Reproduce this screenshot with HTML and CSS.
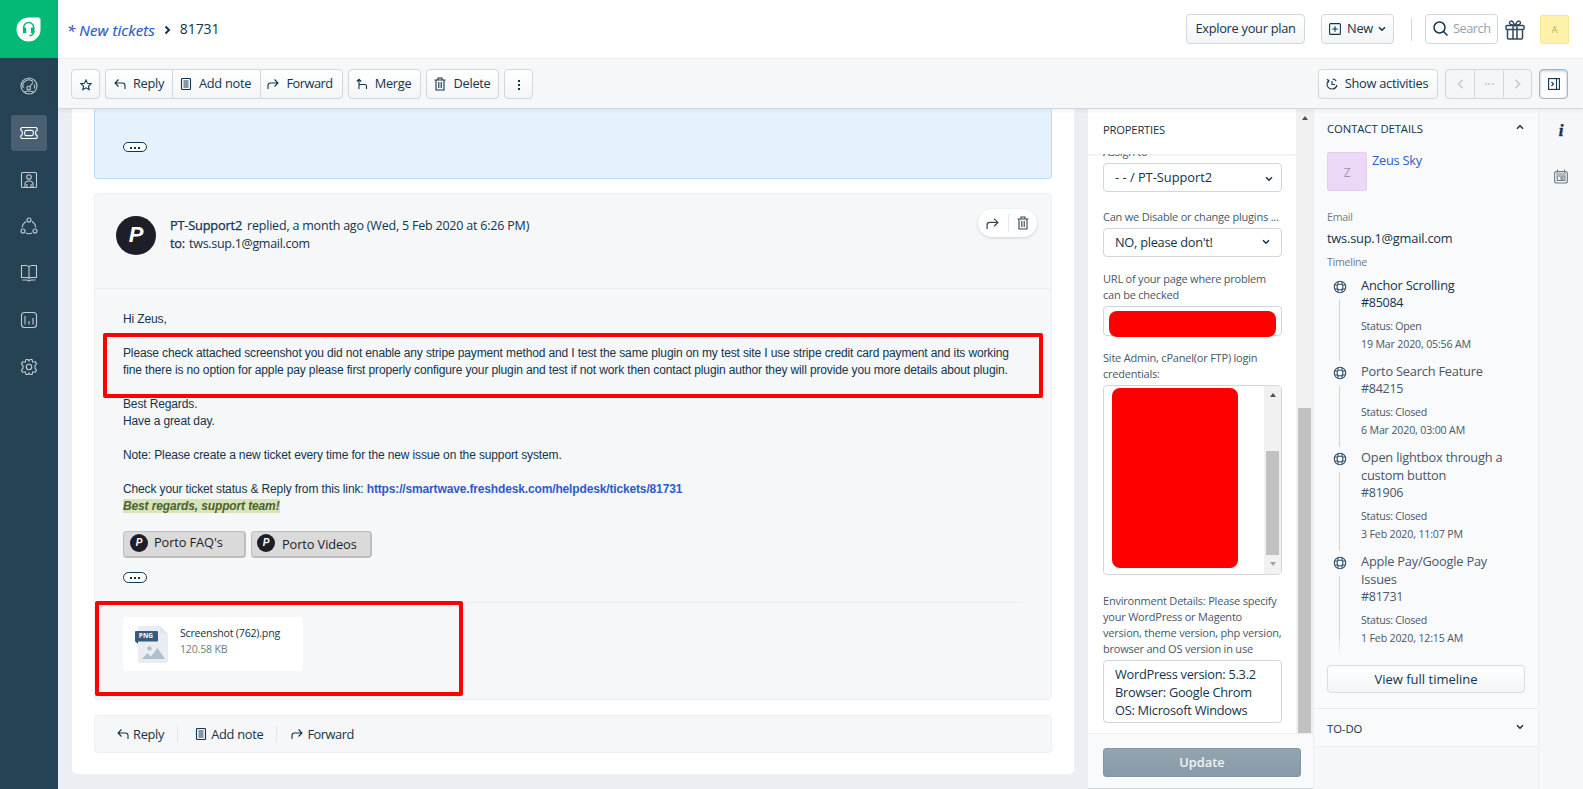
FILE: index.html
```
<!DOCTYPE html>
<html lang="en">
<head>
  <meta charset="UTF-8" />
  <meta name="viewport" content="width=device-width, initial-scale=1.0" />
  <title>81731 | New tickets</title>
  <link rel="stylesheet" href="styles.css">
</head>
<body>
  <svg class="defs" width="0" height="0">
    <symbol id="i-reply" viewBox="0 0 12 12"><path d="M4.500 1.500L1 5l3.500 3.500M1 5h7.500q2.500 0 2.500 2.500V11" /></symbol>
    <symbol id="i-forward" viewBox="0 0 12 12"><path d="M7.500 1.500L11 5 7.500 8.500M11 5H3.500Q1 5 1 7.500V11" /></symbol>
    <symbol id="i-note" viewBox="0 0 12 12"><rect x="1.500" y=".5" width="9" height="11" rx="1" /><path d="M3.500 3h5M3.500 5h5M3.500 7h5M3.500 9h5" /></symbol>
    <symbol id="i-trash" viewBox="0 0 12 14"><path d="M.5 3h11M4 3V1h4v2M2 3v10h8V3M4.800 5v6M7.200 5v6" /></symbol>
    <symbol id="i-down" viewBox="0 0 8 6"><path d="M1 1.200l3 3 3-3" /></symbol>
    <symbol id="i-ring" viewBox="0 0 14 14"><circle cx="7" cy="7" r="5.700" /><rect x="4.200" y="4.200" width="5.600" height="5.600" rx="2" /><path d="M5 1.500v3M9 1.500v3M5 9.500v3M9 9.500v3M1.500 5h3M1.500 9h3M9.500 5h3M9.500 9h3" /></symbol>
  </svg>

  <div class="app">
    <nav class="sidebar">
      <a class="brand">
        <svg width="25" height="25" viewBox="0 0 26 26">
          <path d="M13 .5h10.500a2 2 0 0 1 2 2V13A12.500 12.500 0 1 1 13 .5z" fill="#fff" />
          <path d="M8 13v-2a5.200 5.200 0 0 1 10.400 0v4q0 4-4.500 4.500" fill="none" stroke="#04b976" stroke-width="1.500" />
          <rect x="7.200" y="11" width="3.500" height="6" rx="1" fill="#04b976" />
          <rect x="15.500" y="11" width="3.500" height="6" rx="1" fill="#04b976" />
        </svg>
      </a>
      <a class="nav-item"><svg class="icon" width="18" height="18" viewBox="0 0 18 18"><circle cx="9" cy="9" r="8" /><path d="M3.300 11A6 6 0 0 1 13 4.500M14.500 7.500q.7 2-.2 4M9.700 9.500L13.300 5.500M4.500 15q4.500-2 9 0" /><circle cx="8.700" cy="11" r="1.800" /></svg></a>
      <a class="nav-item active"><svg class="icon" width="18" height="18" viewBox="0 0 18 18"><path d="M1.800 3.500h14.400l1 1v1.700l-1.500 1v3.600l1.500 1v1.700l-1 1H1.800l-1-1v-1.700l1.500-1V7.200L.8 6.200V4.500z" /><rect x="4.700" y="6.400" width="8.600" height="5.200" rx="1.500" /></svg></a>
      <a class="nav-item"><svg class="icon" width="18" height="18" viewBox="0 0 18 18"><rect x="1.500" y="1.500" width="15" height="15" rx="1" /><circle cx="9" cy="6" r="2.300" /><path d="M5 16v-3q0-3 4-3t4 3v3M7 13v3M11 13v3" /></svg></a>
      <a class="nav-item"><svg class="icon" width="18" height="18" viewBox="0 0 18 18"><circle cx="9" cy="3" r="2" /><circle cx="3" cy="14" r="2" /><circle cx="15" cy="14" r="2" /><path d="M6 4.500Q2.300 7 2.300 10.500M12 4.500q3.700 2.500 3.700 6M6 16q3 1.400 6 0" /></svg></a>
      <a class="nav-item"><svg class="icon" width="18" height="18" viewBox="0 0 18 18"><path d="M9 3Q8 1.500 6 1.500H1.500v12H7.500L9 14.500l1.500-1h6v-12H12Q10 1.500 9 3zM9 3v11M2.500 16H7l2 1 2-1h4.500" /></svg></a>
      <a class="nav-item"><svg class="icon" width="18" height="18" viewBox="0 0 18 18"><rect x="1.500" y="1.500" width="15" height="15" rx="3" /><path d="M5 5v8.500M9 10v3.500M13 7v6.500" /></svg></a>
      <a class="nav-item"><svg class="icon" width="18" height="18" viewBox="0 0 18 18"><path d="M7 1.500h1L9 3l1-1.500h2l.8 2.700 2.700-.4 1 2L15 7.800v2.400l1.500 2-1 2-2.700-.4-.8 2.700h-2L9 15l-1 1.500H6l-.8-2.700-2.700.4-1-2 1.500-2V7.800l-1.500-2 1-2 2.700.4.800-2.700z" /><circle cx="9" cy="9" r="2.700" /></svg></a>
    </nav>

    <div class="main">
      <header class="topbar">
        <div class="crumbs">
          <a class="crumb-link">* New tickets</a>
          <svg class="icon crumb-arrow" width="7" height="10" viewBox="0 0 7 10"><path d="M1.500 1.500L5 5 1.500 8.500" /></svg>
          <span class="crumb-id">81731</span>
        </div>
        <button class="btn explore">Explore your plan</button>
        <button class="btn new"><svg class="icon" width="12" height="12" viewBox="0 0 12 12"><rect x=".6" y=".6" width="10.800" height="10.800" rx="1" /><path d="M6 3.200v5.600M3.200 6h5.600" /></svg><span>New</span><svg class="icon bold" width="8" height="6"><use href="#i-down" /></svg></button>
        <span class="sep"></span>
        <div class="search"><svg class="icon" width="15" height="15" viewBox="0 0 15 15"><circle cx="6.500" cy="6.500" r="5.500" /><path d="M10.500 10.500l4 4" /></svg><span>Search</span></div>
        <svg class="icon gift" width="20" height="20" viewBox="0 0 20 20"><rect x="1" y="5.500" width="18" height="4" rx="1" /><path d="M2.500 9.500V18q0 1 1 1h13q1 0 1-1V9.500M8 5.500V19M12 5.500V19M10 5.500Q4 5 4.500 2.500 5.500 0 8 2l2 3.500L12 2q2.500-2 3.500.5.500 2.500-5.500 3" /></svg>
        <span class="user">A</span>
      </header>

      <div class="toolbar">
        <button class="btn square"><svg class="icon" width="12" height="12" viewBox="0 0 13 13"><path d="M6.500 1l1.600 3.700 4 .4-3 2.600.9 4-3.500-2.100L3 11.700l.9-4-3-2.600 4-.4z" /></svg></button>
        <div class="btn-group">
          <button class="btn reply"><svg class="icon" width="12" height="12"><use href="#i-reply" /></svg>Reply</button>
          <button class="btn note"><svg class="icon" width="12" height="12"><use href="#i-note" /></svg>Add note</button>
          <button class="btn fwd"><svg class="icon" width="12" height="12"><use href="#i-forward" /></svg>Forward</button>
        </div>
        <button class="btn merge"><svg class="icon" width="12" height="12" viewBox="0 0 12 12"><path d="M.8 3.500L3 1.200l2.200 2.300M3 1.500V11M3 6.500h6q1.500 0 1.500 1.500v3" /></svg>Merge</button>
        <button class="btn delete"><svg class="icon" width="12" height="14"><use href="#i-trash" /></svg>Delete</button>
        <button class="btn square"><span class="kebab"></span></button>
        <button class="btn activities"><svg class="icon" width="12" height="12" viewBox="0 0 12 12"><path d="M2.500 2.500Q.2 5.500 1.500 8.500 3.500 11.500 7 11q3-.5 4-4M6.500 1Q9 1 10.200 3M6 3v3.500h3M.8 1.500l2 .8-.3 2.200" /></svg>Show activities</button>
        <div class="btn-group pager">
          <button class="btn"><svg class="icon" width="7" height="10" viewBox="0 0 7 10"><path d="M5.500 1L1.500 5l4 4" /></svg></button>
          <button class="btn"><span class="dots"></span></button>
          <button class="btn"><svg class="icon" width="7" height="10" viewBox="0 0 7 10"><path d="M1.500 1l4 4-4 4" /></svg></button>
        </div>
        <button class="btn square pressed"><svg class="icon" width="12" height="12" viewBox="0 0 12 12"><rect x=".6" y=".6" width="10.800" height="10.800" /><path d="M8.500 1v10M3.500 4l2 2-2 2" /></svg></button>
      </div>

      <div class="content">
        <section class="thread">
          <div class="message message-blue"><span class="more"><i></i></span></div>

          <article class="message">
            <div class="message-head">
              <span class="avatar">P</span>
              <div class="meta">
                <div><b>PT-Support2</b> <span class="when">replied, a month ago (Wed, 5 Feb 2020 at 6:26 PM)</span></div>
                <div class="recipient"><b>to:</b> <span class="to">tws.sup.1@gmail.com</span></div>
              </div>
              <div class="hover-actions">
                <svg class="icon" width="13" height="13"><use href="#i-forward" /></svg>
                <span></span>
                <svg class="icon" width="12" height="14"><use href="#i-trash" /></svg>
              </div>
            </div>
            <div class="message-body">
              <div class="text">Hi Zeus,<br><br>Please check attached screenshot you did not enable any stripe payment method and I test the same plugin on my test site I use stripe credit card payment and its working<br>fine there is no option for apple pay please first properly configure your plugin and test if not work then contact plugin author they will provide you more details about plugin.<br><br>Best Regards.<br>Have a great day.<br><br>Note: Please create a new ticket every time for the new issue on the support system.<br><br>Check your ticket status &amp; Reply from this link: <a>https://smartwave.freshdesk.com/helpdesk/tickets/81731</a><br><mark>Best regards, support team!</mark></div>
              <div class="links">
                <a class="porto faq"><span class="porto-logo">P</span><span class="porto-text">Porto FAQ's</span></a>
                <a class="porto videos"><span class="porto-logo">P</span><span class="porto-text">Porto Videos</span></a>
              </div>
              <span class="more"><i></i></span>
              <div class="attachments">
                <div class="file">
                  <svg width="34" height="38" viewBox="0 0 34 38">
                    <path d="M5 0h20l8 8v27a2 2 0 0 1-2 2H5a2 2 0 0 1-2-2V2a2 2 0 0 1 2-2z" fill="#e9edf3" />
                    <path d="M25 0l8 8h-6a2 2 0 0 1-2-2z" fill="#dfe5ec" />
                    <path d="M0 15h3v3z" fill="#1f4360" />
                    <rect y="5" width="23" height="10.500" rx="1" fill="#345c7d" />
                    <text class="file-tag" x="3.800" y="12.300">PNG</text>
                    <circle cx="14.500" cy="22.500" r="2.200" fill="#b1bfcc" />
                    <path d="M7 33l5.500-6 3.500 3.500L22.500 22 30 33z" fill="#b1bfcc" />
                  </svg>
                  <div class="file-info">
                    <div>Screenshot (762).png</div>
                    <div class="file-size">120.58 KB</div>
                  </div>
                </div>
              </div>
            </div>
            <div class="mark mark-text"></div>
            <div class="mark mark-file"></div>
          </article>

          <div class="reply-bar">
            <a><svg class="icon" width="12" height="12"><use href="#i-reply" /></svg>Reply</a>
            <a><svg class="icon" width="12" height="12"><use href="#i-note" /></svg>Add note</a>
            <a><svg class="icon" width="12" height="12"><use href="#i-forward" /></svg>Forward</a>
          </div>
        </section>

        <aside class="properties">
          <div class="props-top">
            <div class="props-main">
              <h2>PROPERTIES</h2>
              <div class="fields">
                <label class="first">Assign to</label>
                <div class="select low">- - / PT-Support2<svg class="icon bold" width="8" height="6"><use href="#i-down" /></svg></div>
                <label class="plugins">Can we Disable or change plugins ...</label>
                <div class="select">NO, please don't!<svg class="icon bold" width="8" height="6"><use href="#i-down" /></svg></div>
                <label>URL of your page where problem<br>can be checked</label>
                <div class="input"><div class="redact"></div></div>
                <label>Site Admin, cPanel(or FTP) login<br>credentials:</label>
                <div class="textarea tall">
                  <div class="redact big"></div>
                  <div class="scrollbar inner"><i class="up"></i><i class="thumb"></i><i class="down"></i></div>
                </div>
                <label class="env-label">Environment Details: Please specify<br>your WordPress or Magento<br>version, theme version, php version,<br>browser and OS version in use</label>
                <div class="textarea env">WordPress version: 5.3.2<br>Browser: Google Chrom<br>OS: Microsoft Windows</div>
              </div>
            </div>
            <div class="scrollbar"><i class="up"></i><i class="thumb"></i></div>
          </div>
          <div class="props-footer"><button>Update</button></div>
        </aside>

        <aside class="contact">
          <div class="contact-details">
            <div class="panel-title">CONTACT DETAILS<svg class="icon bold flip" width="8" height="6"><use href="#i-down" /></svg></div>
            <div class="person"><span class="person-avatar">Z</span><a>Zeus Sky</a></div>
            <div class="caption">Email</div>
            <div class="email">tws.sup.1@gmail.com</div>
            <div class="caption timeline-caption">Timeline</div>
            <ul class="timeline">
              <li class="open">
                <div class="rail"><svg class="icon" width="14" height="14"><use href="#i-ring" /></svg></div>
                <div><div class="subject">Anchor Scrolling</div><div class="num">#85084</div><div class="status">Status: Open</div><div class="date">19 Mar 2020, 05:56 AM</div></div>
              </li>
              <li>
                <div class="rail"><svg class="icon" width="14" height="14"><use href="#i-ring" /></svg></div>
                <div><div class="subject">Porto Search Feature</div><div class="num">#84215</div><div class="status">Status: Closed</div><div class="date">6 Mar 2020, 03:00 AM</div></div>
              </li>
              <li>
                <div class="rail"><svg class="icon" width="14" height="14"><use href="#i-ring" /></svg></div>
                <div><div class="subject">Open lightbox through a<br>custom button</div><div class="num">#81906</div><div class="status">Status: Closed</div><div class="date">3 Feb 2020, 11:07 PM</div></div>
              </li>
              <li>
                <div class="rail"><svg class="icon" width="14" height="14"><use href="#i-ring" /></svg></div>
                <div><div class="subject">Apple Pay/Google Pay<br>Issues</div><div class="num">#81731</div><div class="status">Status: Closed</div><div class="date">1 Feb 2020, 12:15 AM</div></div>
              </li>
            </ul>
            <button class="btn timeline-btn">View full timeline</button>
          </div>
          <div class="todo panel-title">TO-DO<svg class="icon bold" width="8" height="6"><use href="#i-down" /></svg></div>
        </aside>

        <div class="rail-right">
          <span class="info">i</span>
          <svg class="icon calendar" width="14" height="15" viewBox="0 0 14 15"><rect x=".6" y="2.600" width="12.800" height="11.400" rx="2" /><path d="M3.500.5v3M10.500.5v3M2 5h10" /><rect x="3.200" y="7" width="7.800" height="4.500" /><circle cx="8" cy="9.200" r="1.200" /></svg>
        </div>
      </div>
    </div>
  </div>
</body>
</html>
```
FILE: styles.css
```
* {
  box-sizing: border-box;
}
body {
  margin: 0;
  font-family: "Open Sans", "Noto Sans", sans-serif;
  font-size: 12.8px;
  letter-spacing: -0.27px;
  line-height: 18px;
  color: #12344d;
  background: #ebeef3;
  overflow: hidden;
}
.defs {
  position: absolute;
}
.icon {
  fill: none;
  stroke: currentColor;
  stroke-width: 1.1;
  flex: none;
}
.icon.bold {
  stroke-width: 1.5;
}
.app {
  display: flex;
  width: 1583px;
  height: 789px;
}

/* left navigation */
.sidebar {
  width: 58px;
  background: #264255;
  display: flex;
  flex-direction: column;
  align-items: center;
  flex: none;
}
.brand {
  width: 58px;
  height: 58px;
  background: #04b976;
  display: flex;
  align-items: center;
  justify-content: center;
  padding-right: 1px;
  margin-bottom: 10px;
}
.nav-item {
  width: 36px;
  height: 36px;
  margin-bottom: 10.8px;
  border-radius: 3px;
  display: flex;
  align-items: center;
  justify-content: center;
  color: #c3ccd3;
}
.nav-item.active {
  background: #4a6072;
  color: #fff;
}
.main {
  flex: 1;
  display: flex;
  flex-direction: column;
  min-width: 0;
}

/* header */
.topbar {
  height: 59px;
  background: #fff;
  border-bottom: 1px solid #ebeef2;
  display: flex;
  align-items: center;
  padding: 0 14px 0 9px;
  flex: none;
}
.crumbs {
  display: flex;
  align-items: center;
  flex: 1;
  letter-spacing: 0;
}
.crumb-link {
  color: #2c5cc5;
  font-style: italic;
  font-size: 15px;
  padding-top: 2px;
  letter-spacing: 0.1px;
  -webkit-text-stroke: 0.2px;
}
.crumb-arrow {
  stroke-width: 2;
  margin: 1px 9px 0 9px;
}
.crumb-id {
  font-size: 14px;
  letter-spacing: -0.1px;
}
.btn {
  font: inherit;
  letter-spacing: inherit;
  color: #12344d;
  height: 30px;
  padding: 0 0 2px;
  border: 1px solid #cfd7df;
  border-radius: 4px;
  background: linear-gradient(#fff, #f3f5f7);
  display: flex;
  align-items: center;
  justify-content: center;
  white-space: nowrap;
  flex: none;
}
.explore {
  width: 119px;
  margin-right: 16px;
}
.new {
  width: 73px;
  gap: 6px;
}
.new span {
  margin-right: -1px;
}
.sep {
  width: 1px;
  height: 23px;
  background: #cfd7df;
  margin: 0 13px 0 17px;
}
.search {
  width: 73px;
  height: 30px;
  border: 1px solid #cfd7df;
  border-radius: 4px;
  display: flex;
  align-items: center;
  padding: 0 0 2px 7px;
  gap: 5px;
}
.search span {
  color: #92a2b1;
  letter-spacing: -0.5px;
}
.search .icon {
  stroke-width: 1.5;
}
.gift {
  margin: 1px 15px 0 7px;
  stroke-width: 1.5;
  color: #33475b;
}
.user {
  width: 29px;
  height: 29px;
  background: #fff1a8;
  border: 1px solid #f5e698;
  border-radius: 2px;
  color: #b3aa7c;
  font-size: 9px;
  line-height: 28px;
  text-align: center;
}

/* ticket toolbar */
.toolbar {
  height: 50px;
  background: #f5f7f9;
  border-bottom: 1px solid #cfd7df;
  box-shadow: 0 2px 4px rgba(24, 50, 71, 0.06);
  display: flex;
  align-items: center;
  padding: 0 15px 0 13px;
  flex: none;
  gap: 5px;
  position: relative;
  z-index: 2;
}
.toolbar .btn {
  gap: 7px;
}
.btn.square {
  width: 29px;
  padding: 0;
}
.btn-group {
  display: flex;
}
.btn-group .btn {
  border-radius: 0;
  border-right-width: 0;
}
.btn-group .btn:first-child {
  border-radius: 4px 0 0 4px;
}
.btn-group .btn:last-child {
  border-radius: 0 4px 4px 0;
  border-right-width: 1px;
}
.btn .icon {
  margin-top: 2px;
}
.reply {
  width: 67px;
}
.note {
  width: 88px;
}
.toolbar .note,
.toolbar .merge {
  padding-right: 2px;
}
.fwd {
  width: 83px;
}
.toolbar .fwd {
  letter-spacing: -0.5px;
  padding-right: 3px;
}
.merge {
  width: 73px;
}
.delete {
  width: 73px;
}
.kebab {
  width: 2px;
  height: 10px;
  margin-top: 2px;
  background: repeating-linear-gradient(#12344d 0 2px, transparent 2px 4px);
}
.activities {
  width: 120px;
  margin-left: auto;
}
.toolbar .activities {
  padding-right: 2px;
}
.pager {
  margin: 0 2px;
}
.pager .btn {
  width: 29px;
  padding: 0;
  background: #f3f5f7;
  color: #c2cad3;
}
.pager .icon {
  stroke-width: 1.5;
  margin: 0;
}
.dots {
  width: 9px;
  height: 2px;
  background: repeating-linear-gradient(90deg, #cdd4db 0 2px, transparent 2px 3.500px);
}
.pressed {
  border-color: #a5b2bf;
  background: #fff;
  box-shadow: inset 0 1px 3px rgba(18, 52, 77, 0.3);
}
.pressed .icon {
  margin: 1px 0 0;
}

/* conversation */
.content {
  flex: 1;
  display: flex;
  min-height: 0;
}
.thread {
  width: 1002px;
  height: 665px;
  margin: 0 14px;
  padding: 0 22px;
  background: #fff;
  border-radius: 0 0 5px 5px;
  flex: none;
}
.message {
  position: relative;
  height: 507px;
  background: #f5f7f9;
  border: 1px solid #ebeef3;
  border-radius: 4px;
}
.message-blue {
  height: 70px;
  margin-bottom: 14px;
  background: #e5f2fd;
  border-color: #bbdcfe;
  border-top: 0;
  border-radius: 0 0 4px 4px;
  padding: 33px 28px;
}
.more {
  width: 24px;
  height: 10px;
  border: 1px solid #12344d;
  border-radius: 6px;
  background: #fff;
  display: flex;
  justify-content: center;
  padding-top: 4px;
}
.message-body .more {
  height: 11px;
}
.more i {
  width: 10px;
  height: 2px;
  background: repeating-linear-gradient(90deg, #12344d 0 2px, transparent 2px 4px);
}
.message-head {
  height: 95px;
  border-bottom: 1px solid #ebeef3;
  padding: 15px 14px 0 21px;
  display: flex;
  align-items: flex-start;
}
.avatar {
  width: 40px;
  height: 39px;
  margin: 7px 14px 0 0;
  border-radius: 50%;
  background: #1e1e28;
  color: #fff;
  font: italic 700 22px/38px "Liberation Sans", sans-serif;
  text-align: center;
}
.meta {
  flex: 1;
  padding-top: 7px;
}
.meta b {
  font-weight: 500;
  letter-spacing: -0.2px;
  -webkit-text-stroke: 0.25px;
}
.recipient {
  margin-top: -1px;
}
.when {
  font-size: 12.5px;
  letter-spacing: -0.205px;
  margin-left: 2px;
}
.to {
  font-size: 12.5px;
  letter-spacing: -0.3px;
  margin-left: 1px;
}
.hover-actions {
  width: 59px;
  height: 28px;
  border-radius: 14px;
  background: #fff;
  box-shadow: 0 1px 3px rgba(18, 52, 77, 0.18);
  display: flex;
  align-items: center;
  justify-content: space-between;
  padding: 0 8px;
  color: #33475b;
}
.hover-actions span {
  width: 1px;
  height: 18px;
  background: #e6eaee;
}
.message-body {
  padding: 22px 28px 0;
}
.text {
  font: 12px/17px "Liberation Sans", Arial, sans-serif;
  letter-spacing: -0.13px;
  white-space: nowrap;
}
.text a {
  font-weight: bold;
  color: #2c5cc5;
  letter-spacing: -0.148px;
}
.text mark {
  font-weight: bold;
  font-style: italic;
  color: #4f6228;
  background: #d6e3bc;
  letter-spacing: -0.13px;
}
.links {
  display: flex;
  gap: 5px;
  margin: 16px 0 14px;
}
.porto {
  width: 123px;
  height: 27px;
  border: 1px solid #bdbdbd;
  border-width: 1px 2px 2px 1px;
  border-radius: 4px;
  background: #dadada;
  display: flex;
  align-items: center;
  padding: 0 0 2px 6px;
  gap: 6px;
  color: #222;
}
.porto.videos {
  width: 121px;
  padding-left: 5px;
}
.porto-logo {
  width: 18px;
  height: 18px;
  border-radius: 50%;
  background: #1e1e28;
  color: #fff;
  font: italic 700 10px/18px "Liberation Sans", sans-serif;
  text-align: center;
}
.porto-text {
  letter-spacing: -0.1px;
  padding-bottom: 2px;
}
.videos .porto-text {
  padding: 1px 0 0 1px;
}
.attachments {
  margin-top: 19px;
  border-top: 1px solid #ebeef3;
  padding-top: 14px;
}
.file {
  width: 180px;
  height: 54px;
  background: #fff;
  border-radius: 3px;
  display: flex;
  padding: 9px 12px;
  gap: 11px;
}
.file-tag {
  font: 700 6.500px "Open Sans", sans-serif;
  letter-spacing: 0.1px;
  fill: #fff;
}
.file-info {
  font-size: 10.6px;
  letter-spacing: -0.2px;
  line-height: 16px;
  margin-top: -1px;
}
.file-size {
  color: #6f7c87;
}
.mark {
  position: absolute;
  border: 4px solid #f00;
  border-radius: 2px;
}
.mark-text {
  left: 8px;
  top: 139px;
  width: 940px;
  height: 65px;
}
.mark-file {
  left: 0;
  top: 407px;
  width: 368px;
  height: 95px;
}
.reply-bar {
  height: 38px;
  margin-top: 15px;
  border: 1px solid #ebeef3;
  border-radius: 4px;
  background: #f5f7f9;
  display: flex;
  align-items: center;
  padding-left: 22px;
}
.reply-bar a {
  display: flex;
  align-items: center;
  gap: 4px;
  height: 18px;
  padding-right: 13px;
  margin-right: 17px;
  border-right: 1px solid #e3e8ed;
}
.reply-bar a:last-child {
  border: 0;
  margin-left: -3px;
  letter-spacing: -0.45px;
}

/* properties column */
.properties {
  width: 225px;
  display: flex;
  flex-direction: column;
  background: #fff;
  border-bottom: 1px solid #cfd7df;
  flex: none;
}
.props-top {
  flex: 1;
  display: flex;
  min-height: 0;
}
.props-main {
  width: 208px;
  display: flex;
  flex-direction: column;
  overflow: hidden;
}
.properties h2 {
  margin: 0;
  height: 45px;
  padding: 12px 15px 0;
  font-size: 11.2px;
  font-weight: 400;
  letter-spacing: -0.18px;
  box-shadow: 0 1px 2px rgba(24, 50, 71, 0.1);
  flex: none;
}
.fields {
  flex: 1;
  overflow: hidden;
  padding: 0 14px 0 15px;
}
.fields label {
  display: block;
  margin: 14px 0 3px;
  font-size: 11px;
  line-height: 16px;
  letter-spacing: -0.21px;
  color: #475867;
  white-space: nowrap;
}
/* scrolled halfway under the heading */
.fields .first {
  margin: -10px 0 3px;
}
.fields .plugins {
  margin-top: 17px;
}
.select,
.input,
.textarea {
  border: 1px solid #cfd7df;
  border-radius: 4px;
  height: 29px;
  background: #fff;
}
.select {
  display: flex;
  align-items: center;
  justify-content: space-between;
  padding: 0 11px 1px 11px;
}
.select.low {
  padding-right: 8px;
  letter-spacing: 0;
}
.select.low .icon {
  margin-top: 4px;
}
.input {
  height: 30px;
  padding: 4px 5px;
}
.redact {
  width: 167px;
  height: 26px;
  border-radius: 8px;
  background: #f00;
}
.tall {
  height: 190px;
  display: flex;
  justify-content: space-between;
  padding: 2px 0 0 8px;
}
.redact.big {
  width: 126px;
  height: 180px;
}
.scrollbar {
  width: 17px;
  background: #f1f1f1;
  display: flex;
  flex-direction: column;
  align-items: center;
}
.scrollbar .up,
.scrollbar .down {
  border: 3.500px solid transparent;
  border-top: 0;
  border-bottom: 4px solid #505050;
  margin-top: 7px;
}
.scrollbar .down {
  border-bottom: 0;
  border-top: 4px solid #a3a3a3;
}
.scrollbar .thumb {
  width: 13px;
  background: #c1c1c1;
  margin-top: 288px;
  flex: 1;
}
.scrollbar.inner {
  height: 188px;
  margin-top: -2px;
}
.inner .thumb {
  flex: none;
  height: 104px;
  margin-top: 54px;
}
.fields .env-label {
  margin-top: 18px;
}
.env {
  height: 63px;
  padding: 4px 11px;
  white-space: nowrap;
}
.props-footer {
  height: 55px;
  border-top: 1px solid #ebeef2;
  background: #f8fafc;
  padding: 14px 0 0 15px;
  flex: none;
}
.props-footer button {
  width: 198px;
  height: 29px;
  border: 1px solid #8396a3;
  border-radius: 3px;
  background: linear-gradient(#93a4b1, #899ba8);
  color: #eef2f5;
  font: inherit;
  font-weight: 600;
  padding: 0 0 2px;
}

/* contact column */
.contact {
  width: 226px;
  border-left: 1px solid #ebeef3;
  border-right: 1px solid #ebeef3;
  background: #f5f7f9;
  flex: none;
}
.contact-details {
  height: 600px;
  background: #f8fafc;
  border-bottom: 1px solid #ebeef3;
  padding: 11px 13px 0;
}
.panel-title {
  display: flex;
  justify-content: space-between;
  font-size: 11.3px;
  letter-spacing: -0.08px;
  padding-right: 1px;
}
.panel-title .icon {
  margin-top: 4px;
}
.flip {
  transform: scaleY(-1);
}
.person {
  display: flex;
  gap: 5px;
  margin-top: 14px;
}
.person-avatar {
  width: 40px;
  height: 39px;
  background: #ecd8f7;
  border: 1px solid #e2cdee;
  border-radius: 2px;
  color: #a595b0;
  font-size: 12px;
  line-height: 39px;
  text-align: center;
}
.person a {
  color: #2c5cc5;
  margin-top: -1px;
}
.caption {
  font-size: 10.6px;
  letter-spacing: -0.25px;
  color: #6f7c87;
  margin-top: 17px;
}
.email {
  margin: 3px 0 6px;
  letter-spacing: -0.2px;
}
.timeline-caption {
  margin-top: 0;
}
.timeline {
  list-style: none;
  margin: 5px 0 0;
  padding: 0;
}
.timeline li {
  display: flex;
  padding-bottom: 9px;
  color: #475867;
  white-space: nowrap;
}
.timeline .open .subject,
.timeline .open .num {
  color: #12344d;
}
.subject {
  letter-spacing: -0.2px;
}
.rail {
  width: 14px;
  margin: 4px 14px -8px 6px;
  display: flex;
  flex-direction: column;
  align-items: center;
  color: #33536b;
}
.rail::after {
  content: "";
  width: 1px;
  flex: 1;
  margin: 6px 1px 0 0;
  background: #b9d9f3;
}
.timeline li:last-child .rail::after {
  background: linear-gradient(#b9d9f3 75%, rgba(185, 217, 243, 0));
}
.num {
  font-size: 12.5px;
}
.status {
  margin-top: 5px;
  font-size: 10.6px;
  letter-spacing: -0.25px;
}
.date {
  font-size: 10.6px;
  letter-spacing: -0.15px;
}
.timeline-btn {
  width: 198px;
  height: 28px;
  margin-top: 9px;
  padding: 0;
  border-color: #d9dde2;
  font-size: 13px;
  letter-spacing: 0;
}
.todo {
  height: 38px;
  background: #f8fafc;
  border-bottom: 1px solid #ebeef3;
  padding: 11px 14px 0 13px;
}
.rail-right {
  flex: 1;
  background: #f5f7f9;
  display: flex;
  flex-direction: column;
  align-items: center;
  padding-top: 12px;
}
.info {
  font: italic 700 17px/20px "Liberation Serif", serif;
  -webkit-text-stroke: 0.4px;
}
.calendar {
  margin-top: 28px;
  color: #6f7c87;
}
```
